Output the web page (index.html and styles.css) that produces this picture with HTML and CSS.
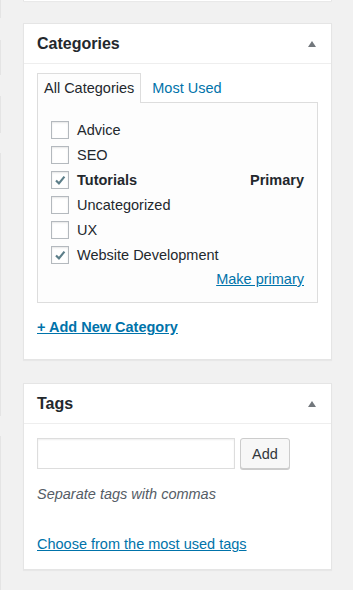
FILE: index.html
```html
<!DOCTYPE html>
<html lang="en">
<head>
  <meta charset="UTF-8" />
  <meta name="viewport" content="width=device-width,initial-scale=1" />
  <title>Post sidebar</title>
  <link rel="stylesheet" href="styles.css">
</head>
<body>
  <div class="edge">
    <span class="seg s1"></span>
    <span class="seg s2"></span>
    <span class="seg s3"></span>
    <span class="seg s4"></span>
    <span class="seg s5"></span>
  </div>

  <div class="sidebar">
    <div class="postbox prev"></div>

    <div class="postbox">
      <div class="hndle">
        <h2>Categories</h2>
        <span class="toggle"></span>
      </div>
      <div class="inside">
        <ul class="tabs">
          <li class="tab active">All Categories</li>
          <li class="tab"><a href="#">Most Used</a></li>
        </ul>
        <div class="panel">
          <ul class="checklist">
            <li><span class="check"></span><span class="label">Advice</span></li>
            <li><span class="check"></span><span class="label">SEO</span></li>
            <li class="primary">
              <span class="check on">
                <svg viewBox="0 0 18 18"><path d="M4.5 9.5 L7.8 12.8 L14 5.2" /></svg>
              </span>
              <span class="label">Tutorials</span>
              <span class="tag">Primary</span>
            </li>
            <li><span class="check"></span><span class="label">Uncategorized</span></li>
            <li><span class="check"></span><span class="label">UX</span></li>
            <li>
              <span class="check on">
                <svg viewBox="0 0 18 18"><path d="M4.5 9.5 L7.8 12.8 L14 5.2" /></svg>
              </span>
              <span class="label">Website Development</span>
            </li>
          </ul>
          <div class="make-primary"><a href="#">Make primary</a></div>
        </div>
        <a href="#" class="add-new">+ Add New Category</a>
      </div>
    </div>

    <div class="postbox">
      <div class="hndle">
        <h2>Tags</h2>
        <span class="toggle"></span>
      </div>
      <div class="inside tags">
        <div class="tag-add">
          <input type="text" class="tag-input" />
          <button class="button">Add</button>
        </div>
        <p class="howto">Separate tags with commas</p>
        <a href="#" class="most-used">Choose from the most used tags</a>
      </div>
    </div>
  </div>
</body>
</html>
```

FILE: styles.css
```css
:root {
  --bg: #f1f1f1;
  --border: #e5e5e5;
  --field: #dddddd;
  --text: #23282d;
  --link: #0073aa;
  --muted: #555d66;
  --shadow: 0 1px 1px rgba(0,0,0,0.04);
}

* { box-sizing: border-box; }

body {
  margin: 0;
  background: var(--bg);
  color: var(--text);
  font-family: "Liberation Sans", Arial, sans-serif;
  font-size: 14.5px;
  display: flex;
  min-height: 590px;
}

a { color: var(--link); }

/* faint edge of the editor column */
.edge {
  width: 1px;
  display: flex;
  flex-direction: column;
}
.seg { display: block; background: #e4e4e4; }
.s1 { height: 18px; margin-bottom: 22px; }
.s2 { height: 35px; margin-bottom: 21px; }
.s3 { height: 37px; margin-bottom: 20px; }
.s4 { height: 263px; margin-bottom: 20px; }
.s5 { flex: 1; }

.sidebar {
  padding-left: 22px;
  width: 331px;
}

.postbox {
  background: #fff;
  border: 1px solid var(--border);
  box-shadow: var(--shadow);
  margin-bottom: 23px;
}
.postbox.prev {
  height: 1px;
  border-top: 0;
  border-bottom: 0;
  margin-bottom: 22px;
}

.hndle {
  height: 40px;
  border-bottom: 1px solid #eee;
  display: flex;
  align-items: center;
  justify-content: space-between;
  padding: 0 15px 0 13px;
}
.hndle h2 {
  margin: 0;
  font-size: 16px;
  font-weight: 700;
  color: var(--text);
}
.toggle {
  width: 0;
  height: 0;
  border-left: 4px solid transparent;
  border-right: 4px solid transparent;
  border-bottom: 6px solid #72777c;
  margin-top: 1px;
}

.inside {
  padding: 9px 13px 22px;
}

.tabs {
  list-style: none;
  margin: 0;
  padding: 0;
  display: flex;
}
.tab {
  height: 29px;
  padding: 0 6px;
  line-height: 28px;
  margin-right: 4px;
  border: 1px solid transparent;
  border-bottom: 0;
}
.tab a { text-decoration: none; }
.tab.active {
  border-color: var(--field);
  background: #fdfdfd;
  margin-bottom: -1px;
  position: relative;
  z-index: 1;
  height: 30px;
}

.panel {
  border: 1px solid var(--field);
  background: #fdfdfd;
  padding: 14px 13px 11px 13px;
}

.checklist {
  list-style: none;
  margin: 0;
  padding: 0;
}
.checklist li {
  height: 25px;
  display: flex;
  align-items: center;
  gap: 8px;
}
.check {
  width: 18px;
  height: 18px;
  border: 1px solid #b4b9be;
  background: #fff;
  box-shadow: inset 0 1px 2px rgba(0,0,0,0.1);
  display: flex;
}
.check svg {
  width: 16px;
  height: 16px;
  fill: none;
  stroke: #5c7e89;
  stroke-width: 2.4;
}
.label { flex: 1; }
.primary .label { font-weight: 700; }
.tag { font-weight: 700; }

.make-primary {
  height: 24px;
  display: flex;
  align-items: center;
  justify-content: flex-end;
}

.add-new {
  display: inline-block;
  margin-top: 14px;
  font-weight: 700;
  line-height: 20px;
}

.inside.tags {
  padding: 14px 13px 15px;
}
.tag-add {
  display: flex;
  gap: 5px;
}
.tag-input {
  width: 198px;
  height: 31px;
  border: 1px solid var(--field);
  box-shadow: inset 0 1px 2px rgba(0,0,0,0.07);
  margin: 0;
  font: inherit;
}
.button {
  width: 50px;
  height: 31px;
  border: 1px solid #ccc;
  border-radius: 3px;
  background: #f7f7f7;
  box-shadow: 0 1px 0 #ccc;
  color: #32373c;
  font: inherit;
  padding: 0;
}
.howto {
  margin: 15px 0 0;
  font-style: italic;
  color: var(--muted);
  line-height: 20px;
}
.most-used {
  display: inline-block;
  margin-top: 30px;
  line-height: 20px;
}
```
